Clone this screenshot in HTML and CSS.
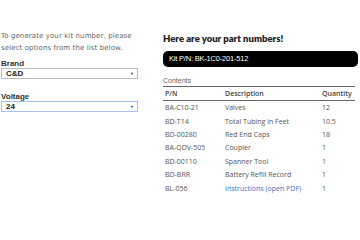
FILE: index.html
```html
<!DOCTYPE html>
<html lang="en">
<head>
    <meta charset="UTF-8">
    <title>Kit Number Generator</title>
    <link rel="stylesheet" href="styles.css">
</head>
<body>
    <div class="container">
        <div class="options">
            <p class="intro">To generate your kit number, please select options from the list below.</p>
            <label class="field-label">Brand</label>
            <div class="select">C&amp;D<span class="arrow">&#9660;</span></div>
            <label class="field-label">Voltage</label>
            <div class="select focused">24<span class="arrow">&#9660;</span></div>
        </div>
        <div class="results">
            <h2>Here are your part numbers!</h2>
            <div class="kit">Kit P/N: BK-1C0-201-512</div>
            <div class="caption">Contents</div>
            <table>
                <colgroup>
                    <col class="pn">
                    <col class="desc">
                    <col>
                </colgroup>
                <thead>
                    <tr>
                        <th>P/N</th>
                        <th>Description</th>
                        <th>Quantity</th>
                    </tr>
                </thead>
                <tbody>
                    <tr><td>BA-C10-21</td><td>Valves</td><td>12</td></tr>
                    <tr><td>BD-T14</td><td>Total Tubing in Feet</td><td>10.5</td></tr>
                    <tr><td>BD-00280</td><td>Red End Caps</td><td>18</td></tr>
                    <tr><td>BA-QDV-505</td><td>Coupler</td><td>1</td></tr>
                    <tr><td>BD-00110</td><td>Spanner Tool</td><td>1</td></tr>
                    <tr><td>BD-BRR</td><td>Battery Refill Record</td><td>1</td></tr>
                    <tr><td>BL-056</td><td><a href="#">Instructions (open PDF)</a></td><td>1</td></tr>
                </tbody>
            </table>
        </div>
    </div>
</body>
</html>
```

FILE: styles.css
```css
body {
    margin: 0;
    padding: 0;
    background-color: #fff;
    font-family: "DejaVu Sans", Verdana, sans-serif;
}

.container {
    display: flex;
    gap: 25px;
    padding: 30px 2px 0 1px;
}

.options {
    width: 137px;
    flex-shrink: 0;
}

.intro {
    margin: 0 0 5px;
    font-size: 7px;
    line-height: 12px;
    color: #666;
    letter-spacing: 0.1px;
}

.field-label {
    display: block;
    font-family: "Liberation Sans", Arial, sans-serif;
    font-weight: bold;
    font-size: 8px;
    color: #333;
    line-height: 9px;
}

.select {
    position: relative;
    box-sizing: border-box;
    height: 11px;
    margin-bottom: 13px;
    padding: 0 4px;
    border: 1px solid #bbb;
    font-family: "Liberation Sans", Arial, sans-serif;
    font-weight: bold;
    font-size: 8px;
    line-height: 9px;
    color: #222;
}

.select.focused {
    border-color: #a6c3ee;
}

.arrow {
    position: absolute;
    right: 3px;
    top: 0;
    font-size: 4px;
    color: #333;
}

.results {
    flex: 1;
}

h2 {
    margin: 3px 0 6px 0;
    font-family: "Lato", sans-serif;
    font-weight: 800;
    font-size: 9.5px;
    line-height: 12px;
    color: #222;
}

.kit {
    background-color: #000;
    color: #fff;
    border-radius: 5px;
    height: 16px;
    line-height: 16px;
    padding: 0 6px;
    font-family: "Liberation Sans", Arial, sans-serif;
    font-size: 7.5px;
    letter-spacing: -0.2px;
}

.caption {
    margin-top: 9px;
    font-family: "Liberation Sans", Arial, sans-serif;
    font-size: 7px;
    color: #666;
    line-height: 10px;
    border-bottom: 1px solid #666;
    margin-right: 3px;
}

table {
    width: calc(100% - 3px);
    table-layout: fixed;
    border-collapse: collapse;
    font-family: "Open Sans", sans-serif;
    font-size: 7px;
    color: #555;
}

col.pn {
    width: 60px;
}

col.desc {
    width: 97px;
}

th, td {
    text-align: left;
    padding: 0 1px 0 2px;
    white-space: nowrap;
}

th {
    font-weight: 600;
    color: #444;
    height: 13px;
    border-bottom: 1px solid #666;
}

td {
    height: 13.4px;
}

a {
    color: #3a74c4;
    text-decoration: none;
}
```
